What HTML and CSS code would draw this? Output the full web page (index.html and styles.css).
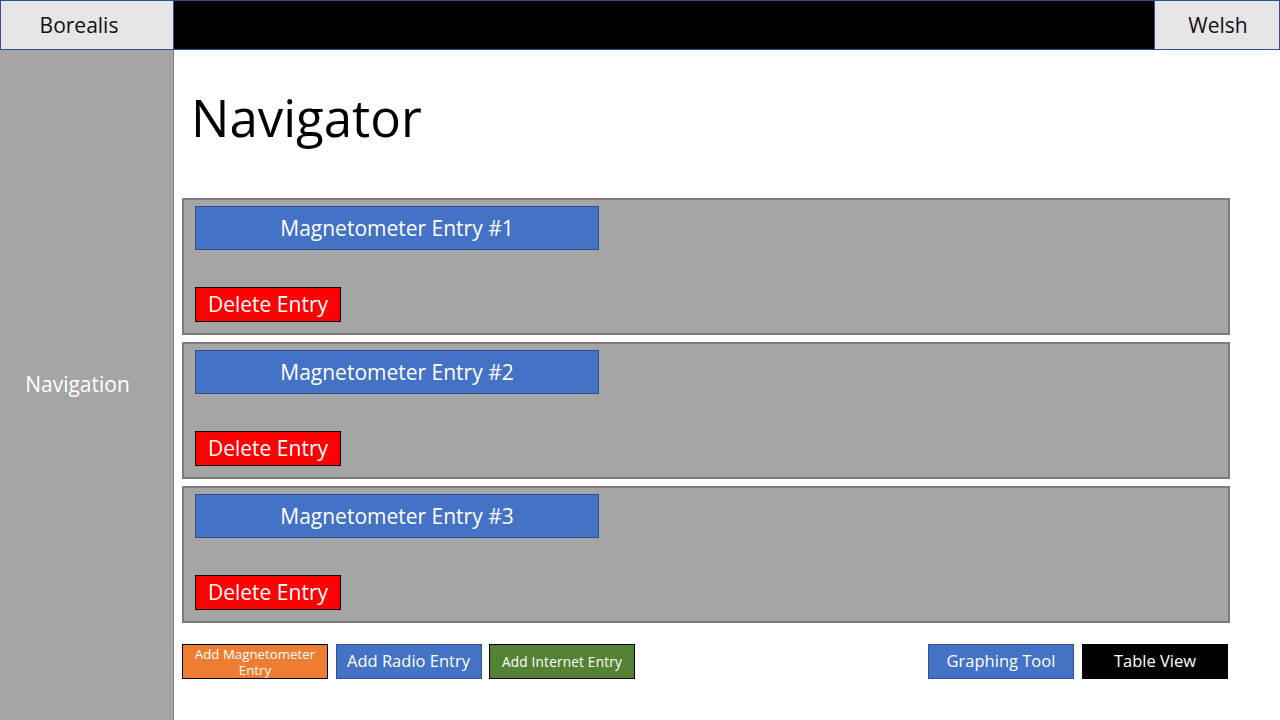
FILE: index.html
```html
<!DOCTYPE html>
<html lang="en">
<head>
<meta charset="utf-8">
<title>Navigator</title>
<link rel="stylesheet" href="styles.css">
</head>
<body>
<div class="app">
  <header class="topbar">
    <div class="brand">Borealis</div>
    <div class="bar-fill"></div>
    <div class="user">Welsh</div>
  </header>
  <div class="body">
    <aside class="sidebar">Navigation</aside>
    <main class="main">
      <h1 class="title">Navigator</h1>
      <div class="entries">
        <section class="entry">
          <div class="entry-head">Magnetometer Entry #1</div>
          <button class="btn btn-delete">Delete Entry</button>
        </section>
        <section class="entry">
          <div class="entry-head">Magnetometer Entry #2</div>
          <button class="btn btn-delete">Delete Entry</button>
        </section>
        <section class="entry">
          <div class="entry-head">Magnetometer Entry #3</div>
          <button class="btn btn-delete">Delete Entry</button>
        </section>
      </div>
      <div class="actions">
        <div class="group">
          <button class="btn btn-orange small">Add Magnetometer Entry</button>
          <button class="btn btn-blue">Add Radio Entry</button>
          <button class="btn btn-green small wide">Add Internet Entry</button>
        </div>
        <div class="group">
          <button class="btn btn-blue">Graphing Tool</button>
          <button class="btn btn-black">Table View</button>
        </div>
      </div>
    </main>
  </div>
</div>
</body>
</html>
```

FILE: styles.css
```css
* { box-sizing: border-box; }
html, body { margin: 0; padding: 0; }
body {
  font-family: "Open Sans", "Liberation Sans", sans-serif;
  background: #ffffff;
  color: #000;
  width: 1280px;
  height: 720px;
  overflow: hidden;
}
.app { display: flex; flex-direction: column; height: 720px; }
.topbar { display: flex; height: 50px; flex: none; }
.brand, .user {
  background: #e7e6e6;
  border: 1px solid #2f528f;
  display: flex;
  align-items: center;
  justify-content: center;
  font-size: 21px;
  color: #111;
}
.brand { width: 174px; padding-right: 16px; }
.user { width: 126px; padding-left: 2px; }
.bar-fill { flex: 1; background: #000; border-top: 1px solid #2f528f; border-bottom: 1px solid #2f528f; }

.body { display: flex; flex: 1; min-height: 0; }
.sidebar {
  width: 174px;
  flex: none;
  background: #a5a5a5;
  border-right: 1px solid #7f7f7f;
  color: #fff;
  font-size: 21px;
  display: flex;
  align-items: center;
  justify-content: center;
  padding-right: 18px;
  padding-bottom: 2px;
}
.main { flex: 1; padding: 0 50px 0 8px; display: flex; flex-direction: column; }
.title {
  margin: 0;
  height: 148px;
  padding: 34px 0 0 9px;
  font-weight: 400;
  font-size: 51px;
  line-height: 66px;
}
.entries { display: flex; flex-direction: column; gap: 7px; }
.entry {
  height: 137px;
  background: #a5a5a5;
  border: 2px solid #7b7b7b;
  padding: 6px 11px 11px 11px;
  display: flex;
  flex-direction: column;
  justify-content: space-between;
  align-items: flex-start;
}
.entry-head {
  width: 404px;
  height: 44px;
  background: #4472c4;
  border: 1px solid #2f528f;
  color: #fff;
  font-size: 21px;
  display: flex;
  align-items: center;
  justify-content: center;
}
.btn {
  width: 146px;
  height: 35px;
  font-family: inherit;
  color: #fff;
  border: 1px solid #000;
  padding: 0 4px;
  display: flex;
  align-items: center;
  justify-content: center;
  text-align: center;
  font-size: 16.5px;
  line-height: 1.1;
  cursor: pointer;
}
.btn-delete { background: #ff0000; font-size: 21px; }
.btn-blue { background: #4472c4; border-color: #2f528f; }
.btn-orange { background: #ed7d31; }
.btn-green { background: #548235; }
.btn-black { background: #000; }
.btn.small { font-size: 13.3px; line-height: 16px; padding: 0 2px; }
.btn.wide { font-size: 13.6px; letter-spacing: 0.2px; }
.actions {
  margin-top: 21px;
  display: flex;
  justify-content: space-between;
  padding-right: 2px;
}
.group { display: flex; gap: 7.5px; }
.group + .group { gap: 8px; }
```
